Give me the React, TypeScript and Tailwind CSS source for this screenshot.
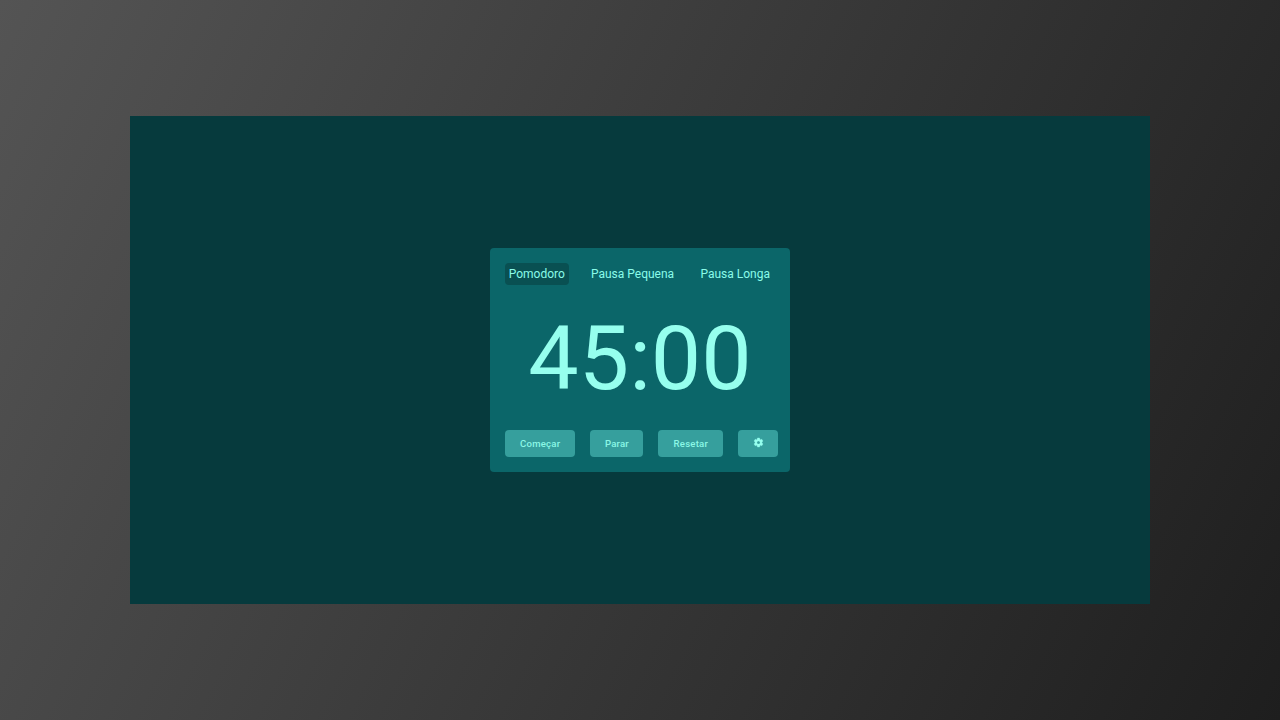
import React from "react";

const tabs = ["Pomodoro", "Pausa Pequena", "Pausa Longa"];

function GearIcon() {
  return (
    <svg viewBox="0 0 24 24" className="mb-[2px] size-[11px]" fill="currentColor" stroke="currentColor" strokeWidth="0.7">
      <path d="M19.43 12.98c.04-.32.07-.64.07-.98s-.03-.66-.07-.98l2.11-1.65c.19-.15.24-.42.12-.64l-2-3.46c-.12-.22-.39-.3-.61-.22l-2.49 1c-.52-.4-1.08-.73-1.69-.98l-.38-2.65C14.46 2.18 14.25 2 14 2h-4c-.25 0-.46.18-.49.42l-.38 2.65c-.61.25-1.17.59-1.69.98l-2.49-1c-.23-.09-.49 0-.61.22l-2 3.46c-.13.22-.07.49.12.64l2.11 1.65c-.04.32-.07.65-.07.98s.03.66.07.98l-2.11 1.65c-.19.15-.24.42-.12.64l2 3.46c.12.22.39.3.61.22l2.49-1c.52.4 1.08.73 1.69.98l.38 2.65c.03.24.24.42.49.42h4c.25 0 .46-.18.49-.42l.38-2.65c.61-.25 1.17-.59 1.69-.98l2.49 1c.23.09.49 0 .61-.22l2-3.46c.12-.22.07-.49-.12-.64l-2.11-1.65zM12 15.5c-1.93 0-3.5-1.57-3.5-3.5s1.57-3.5 3.5-3.5 3.5 1.57 3.5 3.5-1.57 3.5-3.5 3.5z" />
    </svg>
  );
}

export default function App() {
  return (
    <div className="flex h-screen w-screen items-center justify-center overflow-hidden bg-[linear-gradient(116deg,#545454_0%,#1e1e1e_100%)] font-['Roboto',sans-serif] text-[#96ffee]">
      <main className="flex h-[488px] w-[1020px] items-center justify-center bg-[#063a3d]">
        <section className="flex h-[224px] w-[300px] flex-col rounded-[4px] bg-[#0b6669] pt-[15px] pl-[15px]">
          <nav className="flex h-[22px] text-[12px] leading-[22px] whitespace-nowrap text-[#8afbe9]">
            <button className="mr-[18px] h-[21.5px] w-[63.5px] rounded-[4px] bg-[#095052]">{tabs[0]}</button>
            <button className="mr-[18px] w-[92px]">{tabs[1]}</button>
            <button className="w-[77.5px]">{tabs[2]}</button>
          </nav>
          <div className="mt-[20px] flex h-[105px] w-[270px] items-center justify-center pt-[2px] text-[89.7px] leading-[105px]">45:00</div>
          <div className="mt-[20px] flex h-[27px] gap-[15px] text-[9.6px] leading-[27px] font-medium tracking-[0.2px] text-[#8bf7e6]">
            <button className="w-[70.4px] rounded-[4px] bg-[#369f9d]">Começar</button>
            <button className="w-[53px] rounded-[4px] bg-[#369f9d]">Parar</button>
            <button className="w-[64.8px] rounded-[4px] bg-[#369f9d]">Resetar</button>
            <button className="flex w-[39.8px] items-center justify-center rounded-[4px] bg-[#369f9d] text-[#96ffee]"><GearIcon /></button>
          </div>
        </section>
      </main>
    </div>
  );
}
